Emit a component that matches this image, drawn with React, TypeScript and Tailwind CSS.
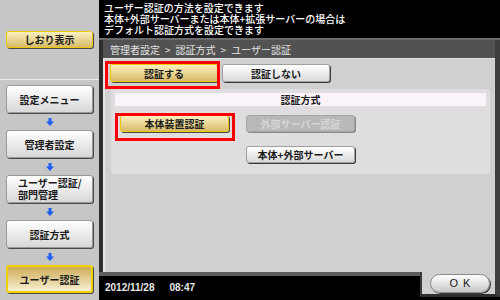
import React from "react";

function DownArrow() {
  return (
    <div className="h-[17px] flex items-center justify-center">
      <svg width="8" height="8" viewBox="0 0 8 8">
        <path d="M2.5 0h3v3.5H8L4 8 0 3.5h2.5z" fill="#1f5ef5" />
      </svg>
    </div>
  );
}

const sideBtn =
  "h-[28px] rounded-[3px] border border-[#9a9a9a] bg-linear-to-b from-[#ffffff] to-[#d8d8d8] shadow-[1px_1px_0_#4a4a4a] flex items-center justify-center text-[10px] font-bold text-[#1a1a1a]";

const yellowBtn =
  "rounded-[3px] border border-[#ecc800] bg-linear-to-b from-[#fbf0c0] to-[#d8bb66] shadow-[1px_1px_0_#4a4a4a] flex items-center justify-center text-[10px] font-bold text-[#1a1a1a]";

const plainBtn =
  "rounded-[3px] border border-[#a0a0a0] bg-linear-to-b from-[#ffffff] to-[#dadada] shadow-[1px_1px_0_#3a3a3a] flex items-center justify-center text-[10px] font-bold text-[#1a1a1a]";

const disabledBtn =
  "rounded-[3px] border border-[#a4a4a4] bg-[#b9b9b9] shadow-[1px_1px_0_#8a8a8a] flex items-center justify-center text-[10px] font-bold text-[#d6d6d6]";

export default function App() {
  return (
    <div className="relative w-[500px] h-[300px] flex bg-black overflow-hidden font-['Noto_Sans_CJK_JP','Noto_Sans',sans-serif]">
      {/* Sidebar */}
      <aside className="w-[99px] shrink-0 bg-[#c6c6c6] flex flex-col">
        <div className="h-[80px] border-b border-[#ececec] px-[6px] pt-[31px]">
          <div className={`h-[17px] ${yellowBtn}`}>しおり表示</div>
        </div>
        <div className="px-[6px] pt-[5px] flex flex-col">
          <div className={sideBtn}>設定メニュー</div>
          <DownArrow />
          <div className={sideBtn}>管理者設定</div>
          <DownArrow />
          <div className={`${sideBtn} !justify-start pl-[11px]`}>
            <div className="flex flex-col">
              <span className="leading-[12px]">ユーザー認証/</span>
              <span className="leading-[12px]">部門管理</span>
            </div>
          </div>
          <DownArrow />
          <div className={sideBtn}>認証方式</div>
          <DownArrow />
          <div className="h-[28px] rounded-[3px] border-2 border-[#f0d000] bg-linear-to-b from-[#cdac55] to-[#f7efd0] shadow-[1px_1px_0_#4a4a4a] flex items-center justify-center text-[10px] font-bold text-[#1a1a1a]">
            ユーザー認証
          </div>
        </div>
      </aside>

      {/* Main */}
      <div className="flex-1 flex flex-col">
        <header className="h-[38px] pl-[5px] pt-[2px] flex flex-col text-white text-[10px] font-medium">
          <p className="h-[11px] leading-[11px]">ユーザー認証の方法を設定できます</p>
          <p className="h-[11px] leading-[11px]">本体+外部サーバーまたは本体+拡張サーバーの場合は</p>
          <p className="h-[11px] leading-[11px]">デフォルト認証方式を設定できます</p>
        </header>

        <div className="flex-1 flex flex-col border-t-2 border-[#6c6c6c]">
          <div className="flex-1 flex flex-col border-l-4 border-l-[#2e2e2e] border-r-[5px] border-r-[#3e3e3e]">
            <div className="h-[19px] bg-[#525252] border-b border-[#e4e4e4] flex items-center gap-[5px] pl-[7px] text-[10px] text-[#e6e6e6]">
              <span>管理者設定</span>
              <span>&gt;</span>
              <span>認証方式</span>
              <span>&gt;</span>
              <span>ユーザー認証</span>
            </div>

            <div className="flex-1 bg-[#d0d0d0] border-l-2 border-l-[#e6e6e6] pt-[5px] px-[5px]">
              <div className="flex gap-[4px]">
                <div className={`w-[108px] h-[18px] ${yellowBtn}`}>認証する</div>
                <div className={`w-[108px] h-[18px] ${plainBtn}`}>認証しない</div>
              </div>

              <div className="mt-[7px] ml-[1px] h-[85px] rounded-[2px] bg-[#dfdddf] p-[4px]">
                <div className="h-[13px] bg-[#faf3fa] flex items-center justify-center text-[10px] font-bold text-[#1a1a1a]">
                  認証方式
                </div>
                <div className="mt-[9px] pl-[5px] grid grid-cols-[109px_109px] gap-x-[17px] gap-y-[14px]">
                  <div className={`h-[17px] ${yellowBtn}`}>本体装置認証</div>
                  <div className={`h-[17px] ${disabledBtn}`}>外部サーバー認証</div>
                  <div />
                  <div className={`h-[17px] ${plainBtn}`}>本体+外部サーバー</div>
                </div>
              </div>
            </div>
          </div>

          {/* Footer row */}
          <div className="h-[28px] flex">
            <div className="flex-1 border-t-4 border-[#5c5c5c] bg-black flex items-center gap-[15px] pl-[6px] pb-[2px] text-[10px] font-bold text-[#e8e8e8] font-['Liberation_Sans',sans-serif]">
              <span>2012/11/28</span>
              <span>08:47</span>
            </div>
            <div className="w-[80px] h-[25px] bg-[#d0d0d0] border-l-2 border-l-[#3a3a3a] border-r-[5px] border-r-[#3e3e3e] border-b-[3px] border-b-[#2e2e2e] pl-[8px] pt-[2px]">
              <div className="w-[60px] h-[19px] rounded-full border border-[#8a8a8a] bg-linear-to-b from-[#ffffff] to-[#c8c8c8] shadow-[1px_1px_0_#3a3a3a] flex items-center justify-center text-[11px] tracking-[5px] pl-[5px] text-[#1a1a1a] font-['Liberation_Sans',sans-serif]">
                OK
              </div>
            </div>
          </div>
        </div>
      </div>

      {/* Red annotation boxes */}
      <div className="absolute left-[105px] top-[61px] w-[115px] h-[28px] border-[3px] border-[#ff0000]" />
      <div className="absolute left-[115px] top-[113px] w-[120px] h-[28px] border-[3px] border-[#ff0000]" />
    </div>
  );
}
